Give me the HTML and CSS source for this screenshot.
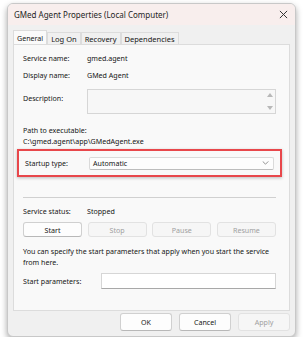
FILE: index.html
```html
<!DOCTYPE html>
<html lang="en">

<head>
    <meta charset="UTF-8">
    <title>GMed Agent Properties</title>
    <link rel="stylesheet" href="styles.css">
</head>

<body>
    <div class="window">
        <div class="titlebar">
            <span class="title">GMed Agent Properties (Local Computer)</span>
            <svg class="close" width="9" height="9" viewBox="0 0 10 10">
                <path d="M1 1 L9 9 M9 1 L1 9" stroke="#333" stroke-width="1.1" fill="none"/>
            </svg>
        </div>
        <div class="tabs">
            <div class="tab active">General</div>
            <div class="tab">Log On</div>
            <div class="tab">Recovery</div>
            <div class="tab">Dependencies</div>
        </div>
        <div class="panel">
            <div class="row">
                <span class="label">Service name:</span>
                <span class="value">gmed.agent</span>
            </div>
            <div class="row">
                <span class="label">Display name:</span>
                <span class="value">GMed Agent</span>
            </div>
            <div class="row desc-row">
                <span class="label">Description:</span>
                <div class="desc-box">
                    <div class="scroll">
                        <span class="arrow up"></span>
                        <span class="arrow down"></span>
                    </div>
                </div>
            </div>
            <div class="path-label">Path to executable:</div>
            <div class="path-value">C:\gmed.agent\app\GMedAgent.exe</div>
            <div class="highlight">
                <span class="label">Startup type:</span>
                <div class="select">
                    <span>Automatic</span>
                    <svg width="7" height="4" viewBox="0 0 8 5">
                        <path d="M0.5 0.5 L4 4 L7.5 0.5" stroke="#777" stroke-width="1" fill="none"/>
                    </svg>
                </div>
            </div>
            <div class="separator"></div>
            <div class="row">
                <span class="label">Service status:</span>
                <span class="value">Stopped</span>
            </div>
            <div class="buttons">
                <button class="btn">Start</button>
                <button class="btn" disabled>Stop</button>
                <button class="btn" disabled>Pause</button>
                <button class="btn" disabled>Resume</button>
            </div>
            <p class="hint">You can specify the start parameters that apply when you start the service from here.</p>
            <div class="row params-row">
                <span class="label wide">Start parameters:</span>
                <div class="input"></div>
            </div>
        </div>
        <div class="footer">
            <button class="btn big">OK</button>
            <button class="btn big">Cancel</button>
            <button class="btn big" disabled>Apply</button>
        </div>
    </div>
</body>

</html>
```

FILE: styles.css
```css
* {
    box-sizing: border-box;
}

body {
    font-family: "Noto Sans", Arial, sans-serif;
    font-size: 7.1px;
    color: #161616;
    margin: 0;
    padding: 3px 0 0 7px;
    background: #fff;
}

.window {
    width: 289px;
    height: 334px;
    background: #f0f0f0;
    border: 1px solid #c8c8c8;
    border-radius: 6px;
    box-shadow: 0 3px 6px rgba(0, 0, 0, 0.35);
    overflow: hidden;
}

.titlebar {
    height: 21px;
    background: #f8eeed;
    display: flex;
    align-items: center;
    justify-content: space-between;
    padding: 0 7px 0 6px;
}

.title {
    font-size: 8px;
    color: #1e1e1e;
}

.tabs {
    display: flex;
    padding: 5px 0 0 5px;
    height: 19px;
}

.tab {
    font-size: 7.5px;
    padding: 0 3px;
    line-height: 12px;
    margin-top: 2px;
    border: 1px solid #dcdcdc;
    border-bottom: none;
    background: #f0f0f0;
}

.tab.active {
    font-size: 7.1px;
    margin-top: 0;
    line-height: 14px;
    background: #fafafa;
}

.panel {
    margin: 0 5px;
    height: 267px;
    background: #f9f9f9;
    border: 1px solid #dcdcdc;
    padding: 4px 13px 0 9px;
}

.row {
    display: flex;
    align-items: center;
    height: 17px;
}

.label {
    width: 64px;
    flex: none;
}

.label.wide {
    width: 78px;
}

.desc-row {
    height: 26px;
    margin-top: 6px;
    align-items: flex-start;
}

.desc-row .label {
    margin-top: 4px;
}

.desc-box {
    flex: 1;
    height: 25px;
    border: 1px solid #d6d6d6;
    background: #f7f7f7;
    display: flex;
    justify-content: flex-end;
}

.scroll {
    width: 10px;
    display: flex;
    flex-direction: column;
    justify-content: space-between;
    align-items: center;
    padding: 3px 0;
}

.arrow {
    width: 0;
    height: 0;
    border-left: 3px solid transparent;
    border-right: 3px solid transparent;
}

.arrow.up {
    border-bottom: 4px solid #b8b8b8;
}

.arrow.down {
    border-top: 4px solid #b8b8b8;
}

.path-label {
    margin-top: 10px;
    line-height: 11px;
}

.path-value {
    line-height: 11px;
}

.highlight {
    display: flex;
    align-items: center;
    margin: 2px -6px 0 -6px;
    height: 28px;
    padding: 0 6px;
    border: 2px solid #e8474b;
    box-shadow: 0 1px 3px rgba(0, 0, 0, 0.25);
}

.select {
    flex: 1;
    height: 13px;
    display: flex;
    align-items: center;
    justify-content: space-between;
    padding: 0 4px 0 3px;
    background: #fdfdfd;
    border: 1px solid #dadada;
    border-bottom-color: #bdbdbd;
    border-radius: 2px;
}

.separator {
    height: 1px;
    background: #d0d0d0;
    margin: 20px 0 4px 0;
}

.buttons {
    display: flex;
    justify-content: space-between;
    margin-top: 3px;
}

.btn {
    font-family: inherit;
    font-size: 7.1px;
    color: #161616;
    width: 59px;
    height: 15px;
    padding: 0;
    background: #fdfdfd;
    border: 1px solid #d0d0d0;
    border-bottom-color: #b8b8b8;
    border-radius: 3px;
}

.btn:disabled {
    color: #a0a0a0;
    background: #f6f6f6;
    border-color: #e2e2e2;
}

.hint {
    margin: 9px 0 0 0;
    line-height: 11px;
}

.params-row {
    margin-top: 4px;
}

.input {
    flex: 1;
    height: 16px;
    background: #fff;
    border: 1px solid #d6d6d6;
    border-bottom-color: #a8a8a8;
}

.footer {
    display: flex;
    justify-content: flex-end;
    gap: 7px;
    padding: 2px 5px 0 0;
}

.btn.big {
    width: 52px;
    height: 18px;
}
```
